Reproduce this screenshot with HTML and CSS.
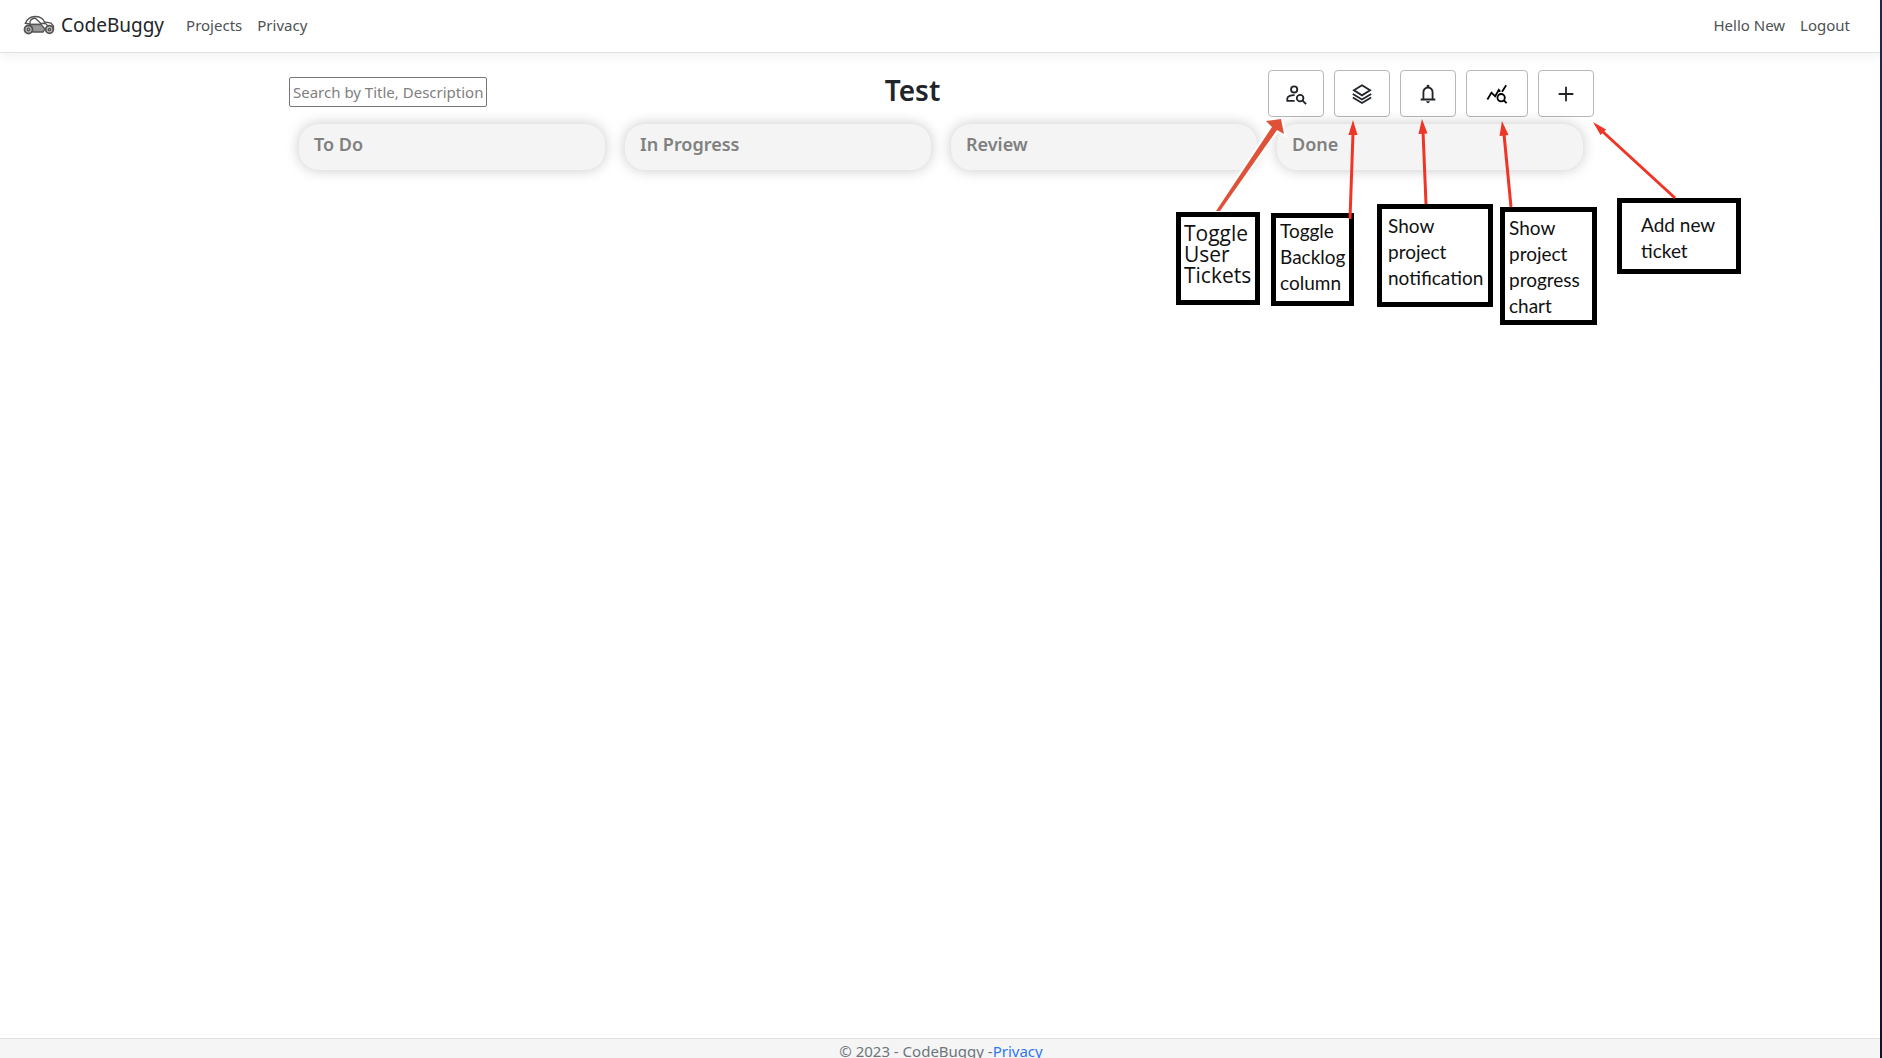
FILE: index.html
```html
<!DOCTYPE html>
<html lang="en">
<head>
<meta charset="utf-8">
<meta name="viewport" content="width=device-width, initial-scale=1">
<title>Test - CodeBuggy</title>
<link rel="stylesheet" href="styles.css">
</head>
<body>
<header class="navbar">
  <a class="brand" href="#">
    <svg class="logo" viewBox="0 0 32 20" fill="none" stroke="#555" stroke-width="1.3" aria-hidden="true">
      <path d="M2 9C4 4 8 1.500 12 1.500C17 1.500 20 3.500 21.500 7L28 8L30.500 11V14H26" />
      <path d="M7 9C6.500 5.500 9 3.500 12 3L18 8.500H22M2 8L8 9.500H17L20 13.500L10 15M12 10L16 14M21 7L25 11" />
      <path d="M7 9.500H18L22 14L20 17H10Z" fill="#999" />
      <circle cx="5.500" cy="14.500" r="4" fill="#bbb" stroke-width="1.800" />
      <circle cx="5.500" cy="14.500" r="1.300" />
      <circle cx="26.500" cy="14.500" r="3.800" fill="#bbb" stroke-width="1.800" />
      <circle cx="26.500" cy="14.500" r="1.200" />
    </svg>
    <span>CodeBuggy</span>
  </a>
  <nav class="links">
    <a href="#">Projects</a>
    <a href="#">Privacy</a>
  </nav>
  <nav class="links account">
    <a href="#">Hello New</a>
    <a href="#">Logout</a>
  </nav>
</header>

<main class="project">
  <div class="toolbar">
    <input class="search" type="text" aria-label="Search tickets" placeholder="Search by Title, Description, Priority">
    <h1>Test</h1>
    <div class="actions">
      <button type="button" aria-label="Toggle user tickets">
        <svg viewBox="0 0 24 24" fill="none" stroke="#212529" stroke-width="2" aria-hidden="true">
          <circle cx="10" cy="7" r="3.400" />
          <path d="M10.500 13.200C7 13 2.500 14.500 2.500 17V19.500H10.500" />
          <circle cx="16.500" cy="16.500" r="3.600" />
          <path d="M19 19L23 23" />
        </svg>
      </button>
      <button type="button" aria-label="Toggle backlog column">
        <svg viewBox="0 0 24 24" fill="none" stroke="#212529" stroke-width="2" aria-hidden="true">
          <path d="M12 2.500L20.800 8L12 13.500L3.200 8Z" />
          <path d="M2 12L12 18L22 12M2 15.800L12 21.800L22 15.800" />
        </svg>
      </button>
      <button type="button" aria-label="Show project notifications">
        <svg viewBox="0 0 24 24" fill="#212529" aria-hidden="true">
          <path d="M4 19v-2h2v-7c0-2.800 1.700-5.200 4.500-5.800V3.500a1.500 1.500 0 0 1 3 0v.7C16.300 4.800 18 7.200 18 10v7h2v2ZM8 17h8v-7c0-2.200-1.800-4-4-4s-4 1.800-4 4ZM12 22a2 2 0 0 1-2-2h4a2 2 0 0 1-2 2Z" />
        </svg>
      </button>
      <button class="wide" type="button" aria-label="Show project progress chart">
        <svg viewBox="0 0 24 24" fill="none" stroke="#000" stroke-width="2" aria-hidden="true">
          <path d="M1.500 18L6 10.500L10 14.500L14 7.500L15.500 9.500M17.500 9.500L22 2.500" />
          <circle cx="16.500" cy="16" r="4" />
          <path d="M19.300 18.800L22.500 22" />
        </svg>
      </button>
      <button type="button" aria-label="Add new ticket">
        <svg viewBox="0 0 24 24" fill="none" stroke="#212529" stroke-width="2" aria-hidden="true">
          <path d="M12 4V20M4 12H20" />
        </svg>
      </button>
    </div>
  </div>

  <div class="columns">
    <section class="column"><h2>To Do</h2></section>
    <section class="column"><h2>In Progress</h2></section>
    <section class="column"><h2>Review</h2></section>
    <section class="column"><h2>Done</h2></section>
  </div>

  <div class="notes">
    <p class="note note-users">Toggle<br>User<br>Tickets</p>
    <p class="note note-backlog">Toggle<br>Backlog<br>column</p>
    <p class="note note-bell">Show<br>project<br>notification</p>
    <p class="note note-chart">Show<br>project<br>progress<br>chart</p>
    <p class="note note-add">Add new<br>ticket</p>
    <svg class="arrows" viewBox="1169 100 560 130" aria-hidden="true">
      <path d="M1216 211L1272 127L1266 121L1281 119L1284 134L1277 130L1220 211" fill="#df5138" stroke="#fff" stroke-width="4" paint-order="stroke" />
      <g fill="none" stroke="#ee3526" stroke-width="3">
        <path d="M1350 219L1353 133M1426 204L1423 131M1511 207L1504 134M1675 198L1602 131" />
      </g>
      <g fill="#ee3526">
        <path d="M1353 120L1357.500 135H1348.500ZM1422 119L1427.500 133.500L1418.500 134ZM1502 121L1508.500 135L1499.500 136ZM1593 122L1606 129.500L1600.500 135Z" />
      </g>
    </svg>
  </div>
</main>

<footer class="footer">© 2023 - CodeBuggy -<a href="#">Privacy</a></footer>
</body>
</html>
```
FILE: styles.css
```css
* {
  box-sizing: border-box;
}

body {
  margin: 0;
  min-height: 100vh;
  display: flex;
  flex-direction: column;
  background: #fff;
  color: #212529;
  font: 15px/24px "Noto Sans", "Open Sans", sans-serif;
}

/* dark edge down the right side of the window */
body::after {
  content: "";
  position: fixed;
  inset: 0 0 0 auto;
  width: 2px;
  background: linear-gradient(#1b2850, #10132b);
}

a {
  text-decoration: none;
}

.navbar {
  display: flex;
  align-items: center;
  height: 53px;
  padding: 0 32px 2px 23px;
  border-bottom: 1px solid #dee2e6;
  box-shadow: 0 4px 12px rgba(0, 0, 0, 0.05);
}

.brand {
  display: flex;
  align-items: center;
  gap: 6px;
  margin-right: 22px;
  color: #212529;
  font-size: 19px;
}

.logo {
  width: 32px;
  height: 20px;
}

.links {
  display: flex;
  gap: 15px;
}

.links a {
  color: #4d5154;
}

.account {
  margin-left: auto;
}

.project {
  position: relative;
  flex: 1;
  width: 100%;
  max-width: 1304px;
  margin: 0 auto;
  padding-top: 17px;
}

.toolbar {
  display: grid;
  grid-template-columns: 268px 1fr auto;
  align-items: start;
  margin-right: -1px;
}

.search {
  width: 198px;
  height: 30px;
  margin-top: 7px;
  padding: 1px 3px;
  border: 1px solid #767676;
  border-radius: 2px;
  background: #fff;
  color: #212529;
  font: inherit;
}

.search::placeholder {
  color: #808080;
}

h1 {
  margin: 3px 0 0;
  text-align: center;
  font-size: 28px;
  font-weight: 600;
  line-height: 34px;
}

.actions {
  display: flex;
  gap: 10px;
}

.actions button {
  display: grid;
  place-items: center;
  width: 56px;
  height: 47px;
  padding: 0;
  border: 1px solid #b8b8b8;
  border-radius: 4px;
  background: #fff;
}

.actions .wide {
  width: 62px;
}

.actions svg {
  width: 22px;
  height: 22px;
}

.columns {
  display: grid;
  grid-template-columns: repeat(4, 1fr);
  gap: 20px;
  padding: 7px 10px 0;
}

.column {
  height: 46px;
  padding: 8px 15px;
  border-radius: 20px;
  background: #f4f4f4;
  box-shadow: 0 0 14px rgba(0, 0, 0, 0.22);
}

h2 {
  margin: 0;
  color: #808080;
  font-size: 18px;
  font-weight: 600;
  line-height: 24px;
}

/* callouts pinned over the board */
.note {
  position: absolute;
  margin: 0;
  border: 5px solid #000;
  background: #fff;
  color: #111;
  font: 19px/26px Lato, "Noto Sans", sans-serif;
  white-space: nowrap;
}

.note-users {
  left: 887px;
  top: 159px;
  width: 84px;
  height: 93px;
  padding: 6px 3px;
  font: 21px/21px "Open Sans", "Noto Sans", sans-serif;
}

.note-backlog {
  left: 982px;
  top: 160px;
  width: 83px;
  height: 93px;
  padding: 0 4px;
}

.note-bell {
  left: 1088px;
  top: 151px;
  width: 116px;
  height: 103px;
  padding: 4px 6px;
}

.note-chart {
  left: 1211px;
  top: 154px;
  width: 97px;
  height: 118px;
  padding: 3px 4px;
}

.note-add {
  left: 1328px;
  top: 145px;
  width: 124px;
  height: 76px;
  padding: 9px 19px;
}

.arrows {
  position: absolute;
  left: 880px;
  top: 47px;
  width: 560px;
  height: 130px;
  pointer-events: none;
}

.footer {
  height: 20px;
  overflow: hidden;
  border-top: 1px solid #dee2e6;
  background: #f5f5f5;
  color: #6c757d;
  text-align: center;
}

.footer a {
  color: #2b78f5;
}
```
